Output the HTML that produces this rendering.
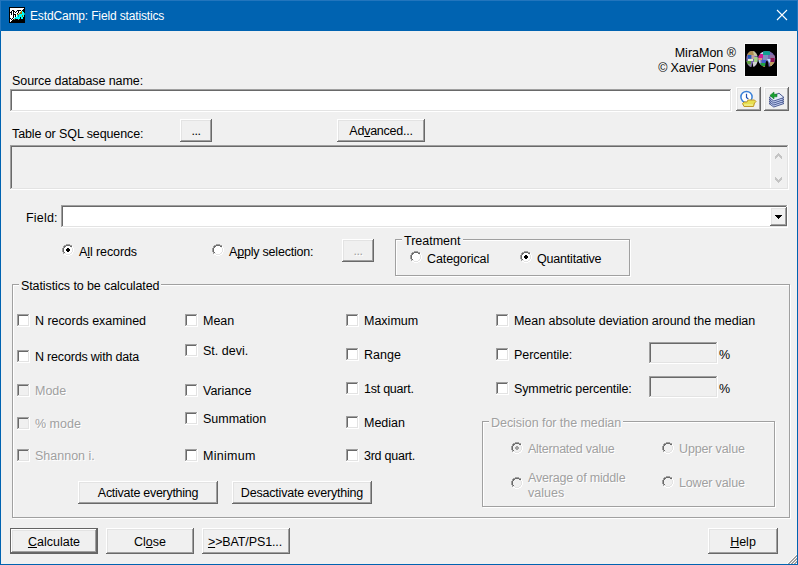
<!DOCTYPE html>
<html><head><meta charset="utf-8"><style>
html,body{margin:0;padding:0;}
body{width:798px;height:565px;position:relative;overflow:hidden;background:#f0f0f0;font-family:"Liberation Sans",sans-serif;font-size:12.50px;color:#000;}
.t{position:absolute;white-space:nowrap;line-height:15px;}
.c{text-align:center;}
.dis{color:#a0a0a0;text-shadow:1px 1px 0 #fff;}
.btn,.sunk,.chk,.rad,.grp,.abs{position:absolute;box-sizing:border-box;}
.btn{background:#f0f0f0;box-shadow:inset -1px -1px 0 #696969,inset 1px 1px 0 #fff,inset -2px -2px 0 #a0a0a0,inset 2px 2px 0 #e3e3e3;}
.btn.def{box-shadow:inset -1px -1px 0 #646464,inset 1px 1px 0 #646464,inset -2px -2px 0 #696969,inset 2px 2px 0 #fff,inset -3px -3px 0 #a0a0a0,inset 3px 3px 0 #e3e3e3;}
.sunk{background:#fff;box-shadow:inset -1px -1px 0 #fff,inset 1px 1px 0 #a0a0a0,inset -2px -2px 0 #e3e3e3,inset 2px 2px 0 #696969;}
.sunk.g{background:#f0f0f0;}
.chk{width:13px;height:13px;background:#fff;box-shadow:inset -1px -1px 0 #fff,inset 1px 1px 0 #a0a0a0,inset -2px -2px 0 #e3e3e3,inset 2px 2px 0 #696969;}
.chk.dis{background:#f0f0f0;}
.rad{width:12px;height:12px;}
.rad svg{display:block;}
.grp{border:1px solid #a0a0a0;box-shadow:1px 1px 0 #fff, inset 1px 1px 0 #fff;}
.gl{background:#f0f0f0;padding:0 2px 0 2px;margin-left:-2px;}
.gl.dis{background:#f0f0f0;}
u{text-decoration:underline;text-underline-offset:1px;text-decoration-thickness:1px;text-decoration-skip-ink:none;}
</style></head><body>

<div class="abs" style="left:0;top:0;width:798px;height:31px;background:#0063b1;"></div>
<div class="abs" style="left:0;top:0;width:798px;height:1px;background:#2275bd;"></div>
<div class="abs" style="left:0;top:0;width:1px;height:31px;background:#2275bd;"></div>
<div class="abs" style="left:797px;top:0;width:1px;height:31px;background:#2275bd;"></div>
<div class="abs" style="left:0;top:31px;width:1px;height:534px;background:#0063b1;"></div>
<div class="abs" style="left:797px;top:31px;width:1px;height:534px;background:#0063b1;"></div>
<div class="abs" style="left:0;top:564px;width:798px;height:1px;background:#0063b1;"></div>
<svg class="abs" style="left:9px;top:7px" width="16" height="16" viewBox="0 0 16 16" shape-rendering="crispEdges"><rect width="16" height="16" fill="#000"/><path fill="#fff" d="M1 1h14v1h-14zM1 2h13v1h-13zM1 3h2v1h-2zM5 3h3v1h-3zM12 3h1v1h-1zM1 4h1v1h-1zM3 4h1v1h-1zM6 4h1v1h-1zM8 4h1v1h-1zM10 4h2v1h-2zM3 5h1v1h-1zM5 5h1v1h-1zM7 5h2v1h-2zM10 5h1v1h-1zM1 6h1v1h-1zM3 6h1v1h-1zM5 6h3v1h-3zM9 6h1v1h-1zM1 7h1v1h-1zM3 7h1v1h-1zM7 7h1v1h-1zM1 8h3v1h-3zM5 8h1v1h-1zM7 8h1v1h-1zM1 9h3v1h-3zM5 9h1v1h-1zM7 9h1v1h-1zM1 10h3v1h-3zM5 10h1v1h-1zM2 11h1v1h-1zM4 11h1v1h-1zM1 12h1v1h-1zM3 12h1v1h-1zM1 13h2v1h-2zM1 14h1v1h-1z"/><path fill="#00ffff" d="M13 4h1v1h-1zM13 5h2v1h-2zM13 6h2v1h-2zM10 7h5v1h-5zM8 8h1v1h-1zM10 8h3v1h-3zM14 8h1v1h-1zM8 9h1v1h-1zM10 9h3v1h-3zM14 9h1v1h-1zM6 10h5v1h-5zM12 10h2v1h-2zM5 11h1v1h-1zM7 11h4v1h-4zM12 11h2v1h-2z"/><path fill="#00a0a0" d="M15 6h1v1h-1zM15 7h1v1h-1zM9 8h1v1h-1zM9 9h1v1h-1zM6 11h1v1h-1z"/><path fill="#a07800" d="M12 4h1v1h-1zM11 5h2v1h-2zM10 6h3v1h-3zM8 7h2v1h-2zM13 8h1v1h-1zM13 9h1v1h-1zM5 12h1v1h-1z"/><path fill="#b09090" d="M9 12h1v1h-1z"/></svg>
<div class="t" style="left:30px;top:9px;font-size:12px;letter-spacing:-0.15px;color:#fff;">EstdCamp: Field statistics</div>
<svg class="abs" style="left:776px;top:9px" width="12" height="12" viewBox="0 0 12 12"><path d="M1 1L11 11M11 1L1 11" stroke="#fff" stroke-width="1.1"/></svg>
<div class="t " style="right:62px;top:46px;">MiraMon ®</div>
<div class="t " style="right:62px;top:61px;letter-spacing:-0.2px;margin-right:0.2px;">© Xavier Pons</div>
<svg class="abs" style="left:744px;top:43px" width="34" height="34" viewBox="0 0 34 34">
<rect x="0" y="0" width="34" height="34" fill="#fafafa"/>
<rect x="1" y="1" width="32" height="32" fill="#000"/>
<defs>
<clipPath id="mm"><ellipse cx="8.05" cy="16" rx="5.75" ry="8"/><ellipse cx="22.7" cy="16" rx="8.5" ry="8"/></clipPath>
</defs>
<g clip-path="url(#mm)">
<rect x="0" y="0" width="34" height="34" fill="#7868b0"/>
<path d="M2 8h9l-1 4h-8z" fill="#b09050"/>
<path d="M9 8h5v5h-4z" fill="#c8c8a0"/>
<path d="M4 12h3.5v3.5h-3.5z" fill="#2060c0"/>
<path d="M7.5 12h3v4h-3z" fill="#c0a0a0"/>
<path d="M10 14h4v5h-4z" fill="#a0d080"/>
<path d="M4 16h5v2h-5z" fill="#e0f0d0"/>
<path d="M2 18h5v3h-5z" fill="#60a040"/>
<path d="M2 21h5v4h-5z" fill="#909098"/>
<path d="M9 19h5v6h-5z" fill="#d0d0d0"/>
<path d="M14 8h5v3h-5z" fill="#c0e0f0"/>
<path d="M19 8h7v4h-7z" fill="#10a090"/>
<path d="M14 11h5v4h-5z" fill="#d01890"/>
<path d="M14 15h4v2h-4z" fill="#e09080"/>
<path d="M19 12h5v5h-5z" fill="#8090c0"/>
<path d="M26 12h6v4h-6z" fill="#9070a0"/>
<path d="M23 16h5l-2.5 4z" fill="#c0e0ff"/>
<path d="M26.5 15h4v4h-4z" fill="#901050"/>
<path d="M26 19h6v6h-6z" fill="#c0a060"/>
<path d="M27 22h3v3h-3z" fill="#f0e0a0"/>
<path d="M18 17h4v3h-4z" fill="#4060d0"/>
<path d="M14 17h2.5v7h-2.5z" fill="#b0d0f0"/>
<path d="M16.5 20h5v3h-5z" fill="#20a040"/>
<path d="M17 23h4l-2 2z" fill="#f0d000"/>
</g>
<path d="M7.3 25L8.45 19.8 9.6 25z" fill="#000"/>
<path d="M13.8 25L14.2 16 14.8 25z" fill="#000"/>
<path d="M21 25C21.3 20 22 17.8 22.9 17.8 23.8 17.8 24.5 20 24.8 25z" fill="#000"/>
</svg>
<div class="t " style="left:12px;top:74px;letter-spacing:-0.08px;">Source database name:</div>
<div class="sunk" style="left:10px;top:89px;width:722px;height:23px;"></div>
<div class="btn" style="left:736px;top:87px;width:25px;height:24px;"></div>
<div class="btn" style="left:764px;top:87px;width:25px;height:24px;"></div>
<svg class="abs" style="left:739px;top:90px" width="20" height="18" viewBox="0 0 20 18">
<circle cx="7.5" cy="7" r="5.6" fill="#fff" stroke="#3a80d8" stroke-width="1.5"/>
<path d="M7.5 3.8v3.6l1.8 1.6" stroke="#2050b0" stroke-width="1.2" fill="none"/>
<path d="M3.5 13.5l1.5-1.5h3l1-2h6.5l1.5 1.5-1.5 1.5-1 3.5h-9.5z" fill="#e8e050" stroke="#c09828" stroke-width="1"/>
<path d="M5 15h9" stroke="#f0f0a0" stroke-width="1.2"/>
</svg>
<svg class="abs" style="left:767px;top:90px" width="20" height="18" viewBox="0 0 20 18">
<g stroke="#3c4c88" stroke-width="0.9" fill="#c8d4f4">
<path d="M2 13.5l10-4.3 5 4.3-10.2 3.5z"/>
<path d="M2 11.5l10-4.3 5 4.3-10.2 3.5z"/>
<path d="M2 9.5l10-4.3 5 4.3-10.2 3.5z"/>
<path d="M2 7.5l10-4.3 5 4.3-10.2 3.5z" fill="#e4ecfa"/>
</g>
<path d="M2.9 5.4l4.1-3.4v2.2h3v2.6h-3v2.2z" fill="#18a030" stroke="#0a7020" stroke-width="0.5"/>
</svg>
<div class="t " style="left:12px;top:127px;letter-spacing:-0.1px;">Table or SQL sequence:</div>
<div class="btn" style="left:180px;top:119px;width:32px;height:23px"></div>
<div class="t c " style="left:180px;width:32px;top:124px;letter-spacing:-0.5px;">...</div>
<div class="btn" style="left:337px;top:119px;width:88px;height:23px"></div>
<div class="t c " style="left:337px;width:88px;top:124px;letter-spacing:-0.25px;">Ad<u>v</u>anced...</div>
<div class="sunk g" style="left:10px;top:145px;width:779px;height:45px;"></div>
<div class="abs" style="left:770px;top:147px;width:1px;height:41px;background:#fff"></div>
<svg class="abs" style="left:775px;top:153px" width="7" height="30" viewBox="0 0 7 30" shape-rendering="crispEdges"><path fill="#c4c4c4" d="M3 0h1v1h-1zM2 1h1v1h-1zM3 1h1v1h-1zM4 1h1v1h-1zM1 2h1v1h-1zM2 2h1v1h-1zM3 2h1v1h-1zM4 2h1v1h-1zM5 2h1v1h-1zM0 3h1v1h-1zM1 3h1v1h-1zM2 3h1v1h-1zM4 3h1v1h-1zM5 3h1v1h-1zM6 3h1v1h-1zM0 4h1v1h-1zM1 4h1v1h-1zM5 4h1v1h-1zM6 4h1v1h-1zM0 5h1v1h-1zM6 5h1v1h-1zM0 24h1v1h-1zM6 24h1v1h-1zM0 25h1v1h-1zM1 25h1v1h-1zM5 25h1v1h-1zM6 25h1v1h-1zM0 26h1v1h-1zM1 26h1v1h-1zM2 26h1v1h-1zM4 26h1v1h-1zM5 26h1v1h-1zM6 26h1v1h-1zM1 27h1v1h-1zM2 27h1v1h-1zM3 27h1v1h-1zM4 27h1v1h-1zM5 27h1v1h-1zM2 28h1v1h-1zM3 28h1v1h-1zM4 28h1v1h-1zM3 29h1v1h-1z"/></svg>
<div class="t " style="left:26px;top:211px;letter-spacing:0.2px;">Field:</div>
<div class="sunk" style="left:61px;top:205px;width:727px;height:23px;"></div>
<div class="btn" style="left:770px;top:207px;width:17px;height:19px;"></div>
<svg class="abs" style="left:775px;top:215px" width="7" height="4" viewBox="0 0 7 4" shape-rendering="crispEdges"><path d="M0 0h7v1h-1v1h-1v1h-1v1h-1v-1h-1v-1h-1v-1h-1z" fill="#000"/></svg>
<div class="rad" style="left:62px;top:244px"><svg width="12" height="12" viewBox="0 0 12 12" shape-rendering="crispEdges"><path fill="#a0a0a0" d="M4 0h4v1h-4zM2 1h2v1h-2zM8 1h2v1h-2zM1 2h1v2h-1zM0 4h1v4h-1zM1 8h1v2h-1z"/><path fill="#696969" d="M4 1h4v1h-4zM2 2h2v1h-2zM8 2h2v1h-2zM2 3h1v1h-1zM1 4h1v4h-1zM2 8h1v1h-1z"/><path fill="#fff" d="M10 2h1v2h-1zM11 4h1v4h-1zM10 8h1v2h-1zM8 10h2v1h-2zM2 10h2v1h-2zM4 11h4v1h-4z"/><path fill="#e3e3e3" d="M9 3h1v1h-1zM10 4h1v4h-1zM9 8h1v1h-1zM8 9h1v1h-1zM3 9h1v1h-1zM4 10h4v1h-4z"/><path fill="#fff" d="M4 2h4v1h1v1h1v4h-1v1h-1v1h-4v-1h-1v-1h-1v-4h1v-1h1z"/><path d="M5 4h2v4h-2zM4 5h4v2h-4z" fill="#000"/></svg></div>
<div class="t " style="left:79px;top:245px;letter-spacing:-0.1px;">A<u>l</u>l records</div>
<div class="rad" style="left:212px;top:244px"><svg width="12" height="12" viewBox="0 0 12 12" shape-rendering="crispEdges"><path fill="#a0a0a0" d="M4 0h4v1h-4zM2 1h2v1h-2zM8 1h2v1h-2zM1 2h1v2h-1zM0 4h1v4h-1zM1 8h1v2h-1z"/><path fill="#696969" d="M4 1h4v1h-4zM2 2h2v1h-2zM8 2h2v1h-2zM2 3h1v1h-1zM1 4h1v4h-1zM2 8h1v1h-1z"/><path fill="#fff" d="M10 2h1v2h-1zM11 4h1v4h-1zM10 8h1v2h-1zM8 10h2v1h-2zM2 10h2v1h-2zM4 11h4v1h-4z"/><path fill="#e3e3e3" d="M9 3h1v1h-1zM10 4h1v4h-1zM9 8h1v1h-1zM8 9h1v1h-1zM3 9h1v1h-1zM4 10h4v1h-4z"/><path fill="#fff" d="M4 2h4v1h1v1h1v4h-1v1h-1v1h-4v-1h-1v-1h-1v-4h1v-1h1z"/></svg></div>
<div class="t " style="left:229px;top:245px;letter-spacing:-0.2px;">A<u>p</u>ply selection:</div>
<div class="btn" style="left:342px;top:239px;width:32px;height:23px"></div>
<div class="t c dis" style="left:342px;width:32px;top:244px;letter-spacing:-0.5px;">...</div>
<div class="grp" style="left:395px;top:239px;width:235px;height:37px"></div>
<div class="t gl" style="left:404px;top:234px;">Treatment</div>
<div class="rad" style="left:410px;top:251px"><svg width="12" height="12" viewBox="0 0 12 12" shape-rendering="crispEdges"><path fill="#a0a0a0" d="M4 0h4v1h-4zM2 1h2v1h-2zM8 1h2v1h-2zM1 2h1v2h-1zM0 4h1v4h-1zM1 8h1v2h-1z"/><path fill="#696969" d="M4 1h4v1h-4zM2 2h2v1h-2zM8 2h2v1h-2zM2 3h1v1h-1zM1 4h1v4h-1zM2 8h1v1h-1z"/><path fill="#fff" d="M10 2h1v2h-1zM11 4h1v4h-1zM10 8h1v2h-1zM8 10h2v1h-2zM2 10h2v1h-2zM4 11h4v1h-4z"/><path fill="#e3e3e3" d="M9 3h1v1h-1zM10 4h1v4h-1zM9 8h1v1h-1zM8 9h1v1h-1zM3 9h1v1h-1zM4 10h4v1h-4z"/><path fill="#fff" d="M4 2h4v1h1v1h1v4h-1v1h-1v1h-4v-1h-1v-1h-1v-4h1v-1h1z"/></svg></div>
<div class="t " style="left:427px;top:252px;letter-spacing:-0.1px;">Categorical</div>
<div class="rad" style="left:520px;top:251px"><svg width="12" height="12" viewBox="0 0 12 12" shape-rendering="crispEdges"><path fill="#a0a0a0" d="M4 0h4v1h-4zM2 1h2v1h-2zM8 1h2v1h-2zM1 2h1v2h-1zM0 4h1v4h-1zM1 8h1v2h-1z"/><path fill="#696969" d="M4 1h4v1h-4zM2 2h2v1h-2zM8 2h2v1h-2zM2 3h1v1h-1zM1 4h1v4h-1zM2 8h1v1h-1z"/><path fill="#fff" d="M10 2h1v2h-1zM11 4h1v4h-1zM10 8h1v2h-1zM8 10h2v1h-2zM2 10h2v1h-2zM4 11h4v1h-4z"/><path fill="#e3e3e3" d="M9 3h1v1h-1zM10 4h1v4h-1zM9 8h1v1h-1zM8 9h1v1h-1zM3 9h1v1h-1zM4 10h4v1h-4z"/><path fill="#fff" d="M4 2h4v1h1v1h1v4h-1v1h-1v1h-4v-1h-1v-1h-1v-4h1v-1h1z"/><path d="M5 4h2v4h-2zM4 5h4v2h-4z" fill="#000"/></svg></div>
<div class="t " style="left:537px;top:252px;letter-spacing:-0.2px;">Quantitative</div>
<div class="grp" style="left:12px;top:284px;width:778px;height:234px"></div>
<div class="t gl" style="left:21px;top:279px;letter-spacing:-0.1px;">Statistics to be calculated</div>
<div class="chk" style="left:17px;top:314px"></div>
<div class="t " style="left:35px;top:314px;letter-spacing:-0.05px;">N records examined</div>
<div class="chk" style="left:17px;top:350px"></div>
<div class="t " style="left:35px;top:350px;letter-spacing:-0.19px;">N records with data</div>
<div class="chk dis" style="left:17px;top:384px"></div>
<div class="t dis" style="left:35px;top:384px;">Mode</div>
<div class="chk dis" style="left:17px;top:417px"></div>
<div class="t dis" style="left:35px;top:417px;">% mode</div>
<div class="chk dis" style="left:17px;top:449px"></div>
<div class="t dis" style="left:35px;top:449px;">Shannon i.</div>
<div class="chk" style="left:185px;top:314px"></div>
<div class="t " style="left:203px;top:314px;">Mean</div>
<div class="chk" style="left:185px;top:344px"></div>
<div class="t " style="left:203px;top:344px;">St. devi.</div>
<div class="chk" style="left:185px;top:384px"></div>
<div class="t " style="left:203px;top:384px;">Variance</div>
<div class="chk" style="left:185px;top:412px"></div>
<div class="t " style="left:203px;top:412px;">Summation</div>
<div class="chk" style="left:185px;top:449px"></div>
<div class="t " style="left:203px;top:449px;letter-spacing:0.3px;">Minimum</div>
<div class="chk" style="left:346px;top:314px"></div>
<div class="t " style="left:364px;top:314px;">Maximum</div>
<div class="chk" style="left:346px;top:348px"></div>
<div class="t " style="left:364px;top:348px;">Range</div>
<div class="chk" style="left:346px;top:382px"></div>
<div class="t " style="left:364px;top:382px;letter-spacing:-0.25px;">1st quart.</div>
<div class="chk" style="left:346px;top:416px"></div>
<div class="t " style="left:364px;top:416px;">Median</div>
<div class="chk" style="left:346px;top:449px"></div>
<div class="t " style="left:364px;top:449px;letter-spacing:-0.25px;">3rd quart.</div>
<div class="chk" style="left:496px;top:314px"></div>
<div class="t " style="left:514px;top:314px;letter-spacing:-0.05px;">Mean absolute deviation around the median</div>
<div class="chk" style="left:496px;top:348px"></div>
<div class="t " style="left:514px;top:348px;letter-spacing:-0.08px;">Percentile:</div>
<div class="chk" style="left:496px;top:382px"></div>
<div class="t " style="left:514px;top:382px;letter-spacing:-0.12px;">Symmetric percentile:</div>
<div class="sunk g" style="left:649px;top:342px;width:69px;height:22px;"></div>
<div class="t " style="left:719px;top:348px;">%</div>
<div class="sunk g" style="left:649px;top:376px;width:69px;height:22px;"></div>
<div class="t " style="left:719px;top:382px;">%</div>
<div class="grp" style="left:482px;top:421px;width:293px;height:86px"></div>
<div class="t gl dis" style="left:491px;top:416px;letter-spacing:-0.05px;">Decision for the median</div>
<div class="rad" style="left:511px;top:442px"><svg width="12" height="12" viewBox="0 0 12 12" shape-rendering="crispEdges"><path fill="#a0a0a0" d="M4 0h4v1h-4zM2 1h2v1h-2zM8 1h2v1h-2zM1 2h1v2h-1zM0 4h1v4h-1zM1 8h1v2h-1z"/><path fill="#696969" d="M4 1h4v1h-4zM2 2h2v1h-2zM8 2h2v1h-2zM2 3h1v1h-1zM1 4h1v4h-1zM2 8h1v1h-1z"/><path fill="#fff" d="M10 2h1v2h-1zM11 4h1v4h-1zM10 8h1v2h-1zM8 10h2v1h-2zM2 10h2v1h-2zM4 11h4v1h-4z"/><path fill="#e3e3e3" d="M9 3h1v1h-1zM10 4h1v4h-1zM9 8h1v1h-1zM8 9h1v1h-1zM3 9h1v1h-1zM4 10h4v1h-4z"/><path fill="#f0f0f0" d="M4 2h4v1h1v1h1v4h-1v1h-1v1h-4v-1h-1v-1h-1v-4h1v-1h1z"/><path d="M5 4h2v4h-2zM4 5h4v2h-4z" fill="#a0a0a0"/></svg></div>
<div class="t dis" style="left:528px;top:442px;letter-spacing:-0.25px;">Alternated value</div>
<div class="rad" style="left:662px;top:442px"><svg width="12" height="12" viewBox="0 0 12 12" shape-rendering="crispEdges"><path fill="#a0a0a0" d="M4 0h4v1h-4zM2 1h2v1h-2zM8 1h2v1h-2zM1 2h1v2h-1zM0 4h1v4h-1zM1 8h1v2h-1z"/><path fill="#696969" d="M4 1h4v1h-4zM2 2h2v1h-2zM8 2h2v1h-2zM2 3h1v1h-1zM1 4h1v4h-1zM2 8h1v1h-1z"/><path fill="#fff" d="M10 2h1v2h-1zM11 4h1v4h-1zM10 8h1v2h-1zM8 10h2v1h-2zM2 10h2v1h-2zM4 11h4v1h-4z"/><path fill="#e3e3e3" d="M9 3h1v1h-1zM10 4h1v4h-1zM9 8h1v1h-1zM8 9h1v1h-1zM3 9h1v1h-1zM4 10h4v1h-4z"/><path fill="#f0f0f0" d="M4 2h4v1h1v1h1v4h-1v1h-1v1h-4v-1h-1v-1h-1v-4h1v-1h1z"/></svg></div>
<div class="t dis" style="left:679px;top:442px;letter-spacing:-0.15px;">Upper value</div>
<div class="rad" style="left:511px;top:477px"><svg width="12" height="12" viewBox="0 0 12 12" shape-rendering="crispEdges"><path fill="#a0a0a0" d="M4 0h4v1h-4zM2 1h2v1h-2zM8 1h2v1h-2zM1 2h1v2h-1zM0 4h1v4h-1zM1 8h1v2h-1z"/><path fill="#696969" d="M4 1h4v1h-4zM2 2h2v1h-2zM8 2h2v1h-2zM2 3h1v1h-1zM1 4h1v4h-1zM2 8h1v1h-1z"/><path fill="#fff" d="M10 2h1v2h-1zM11 4h1v4h-1zM10 8h1v2h-1zM8 10h2v1h-2zM2 10h2v1h-2zM4 11h4v1h-4z"/><path fill="#e3e3e3" d="M9 3h1v1h-1zM10 4h1v4h-1zM9 8h1v1h-1zM8 9h1v1h-1zM3 9h1v1h-1zM4 10h4v1h-4z"/><path fill="#f0f0f0" d="M4 2h4v1h1v1h1v4h-1v1h-1v1h-4v-1h-1v-1h-1v-4h1v-1h1z"/></svg></div>
<div class="t dis" style="left:528px;top:471px;letter-spacing:-0.18px;">Average of middle</div>
<div class="t dis" style="left:528px;top:486px;">values</div>
<div class="rad" style="left:662px;top:476px"><svg width="12" height="12" viewBox="0 0 12 12" shape-rendering="crispEdges"><path fill="#a0a0a0" d="M4 0h4v1h-4zM2 1h2v1h-2zM8 1h2v1h-2zM1 2h1v2h-1zM0 4h1v4h-1zM1 8h1v2h-1z"/><path fill="#696969" d="M4 1h4v1h-4zM2 2h2v1h-2zM8 2h2v1h-2zM2 3h1v1h-1zM1 4h1v4h-1zM2 8h1v1h-1z"/><path fill="#fff" d="M10 2h1v2h-1zM11 4h1v4h-1zM10 8h1v2h-1zM8 10h2v1h-2zM2 10h2v1h-2zM4 11h4v1h-4z"/><path fill="#e3e3e3" d="M9 3h1v1h-1zM10 4h1v4h-1zM9 8h1v1h-1zM8 9h1v1h-1zM3 9h1v1h-1zM4 10h4v1h-4z"/><path fill="#f0f0f0" d="M4 2h4v1h1v1h1v4h-1v1h-1v1h-4v-1h-1v-1h-1v-4h1v-1h1z"/></svg></div>
<div class="t dis" style="left:679px;top:476px;letter-spacing:-0.15px;">Lower value</div>
<div class="btn" style="left:78px;top:481px;width:140px;height:23px"></div>
<div class="t c " style="left:78px;width:140px;top:486px;letter-spacing:-0.28px;">Activate everything</div>
<div class="btn" style="left:232px;top:481px;width:140px;height:23px"></div>
<div class="t c " style="left:232px;width:140px;top:486px;letter-spacing:-0.19px;">Desactivate everything</div>
<div class="btn def" style="left:10px;top:528px;width:88px;height:26px"></div>
<div class="t c " style="left:10px;width:88px;top:535px;"><u>C</u>alculate</div>
<div class="btn" style="left:106px;top:528px;width:88px;height:26px"></div>
<div class="t c " style="left:106px;width:88px;top:535px;">Cl<u>o</u>se</div>
<div class="btn" style="left:202px;top:528px;width:88px;height:26px"></div>
<div class="t c " style="left:201px;width:88px;top:535px;letter-spacing:-0.12px;"><u>&gt;</u>&gt;BAT/PS1...</div>
<div class="btn" style="left:708px;top:528px;width:70px;height:26px"></div>
<div class="t c " style="left:708px;width:70px;top:535px;"><u>H</u>elp</div>
<svg class="abs" style="left:787px;top:554px" width="10" height="10" viewBox="0 0 10 10" shape-rendering="crispEdges"><path fill="#fff" d="M9 0h1v1h-1zM8 1h1v1h-1zM7 2h1v1h-1zM6 3h1v1h-1zM9 3h1v1h-1zM5 4h1v1h-1zM8 4h1v1h-1zM4 5h1v1h-1zM7 5h1v1h-1zM3 6h1v1h-1zM6 6h1v1h-1zM9 6h1v1h-1zM2 7h1v1h-1zM5 7h1v1h-1zM8 7h1v1h-1zM1 8h1v1h-1zM4 8h1v1h-1zM7 8h1v1h-1zM0 9h1v1h-1zM3 9h1v1h-1zM6 9h1v1h-1zM9 9h1v1h-1z"/><path fill="#a0a0a0" d="M9 1h1v1h-1zM8 2h1v1h-1zM9 2h1v1h-1zM7 3h1v1h-1zM8 3h1v1h-1zM6 4h1v1h-1zM7 4h1v1h-1zM9 4h1v1h-1zM5 5h1v1h-1zM6 5h1v1h-1zM8 5h1v1h-1zM9 5h1v1h-1zM4 6h1v1h-1zM5 6h1v1h-1zM7 6h1v1h-1zM8 6h1v1h-1zM3 7h1v1h-1zM4 7h1v1h-1zM6 7h1v1h-1zM7 7h1v1h-1zM9 7h1v1h-1zM2 8h1v1h-1zM3 8h1v1h-1zM5 8h1v1h-1zM6 8h1v1h-1zM8 8h1v1h-1zM9 8h1v1h-1zM1 9h1v1h-1zM2 9h1v1h-1zM4 9h1v1h-1zM5 9h1v1h-1zM7 9h1v1h-1zM8 9h1v1h-1z"/></svg>
</body></html>
